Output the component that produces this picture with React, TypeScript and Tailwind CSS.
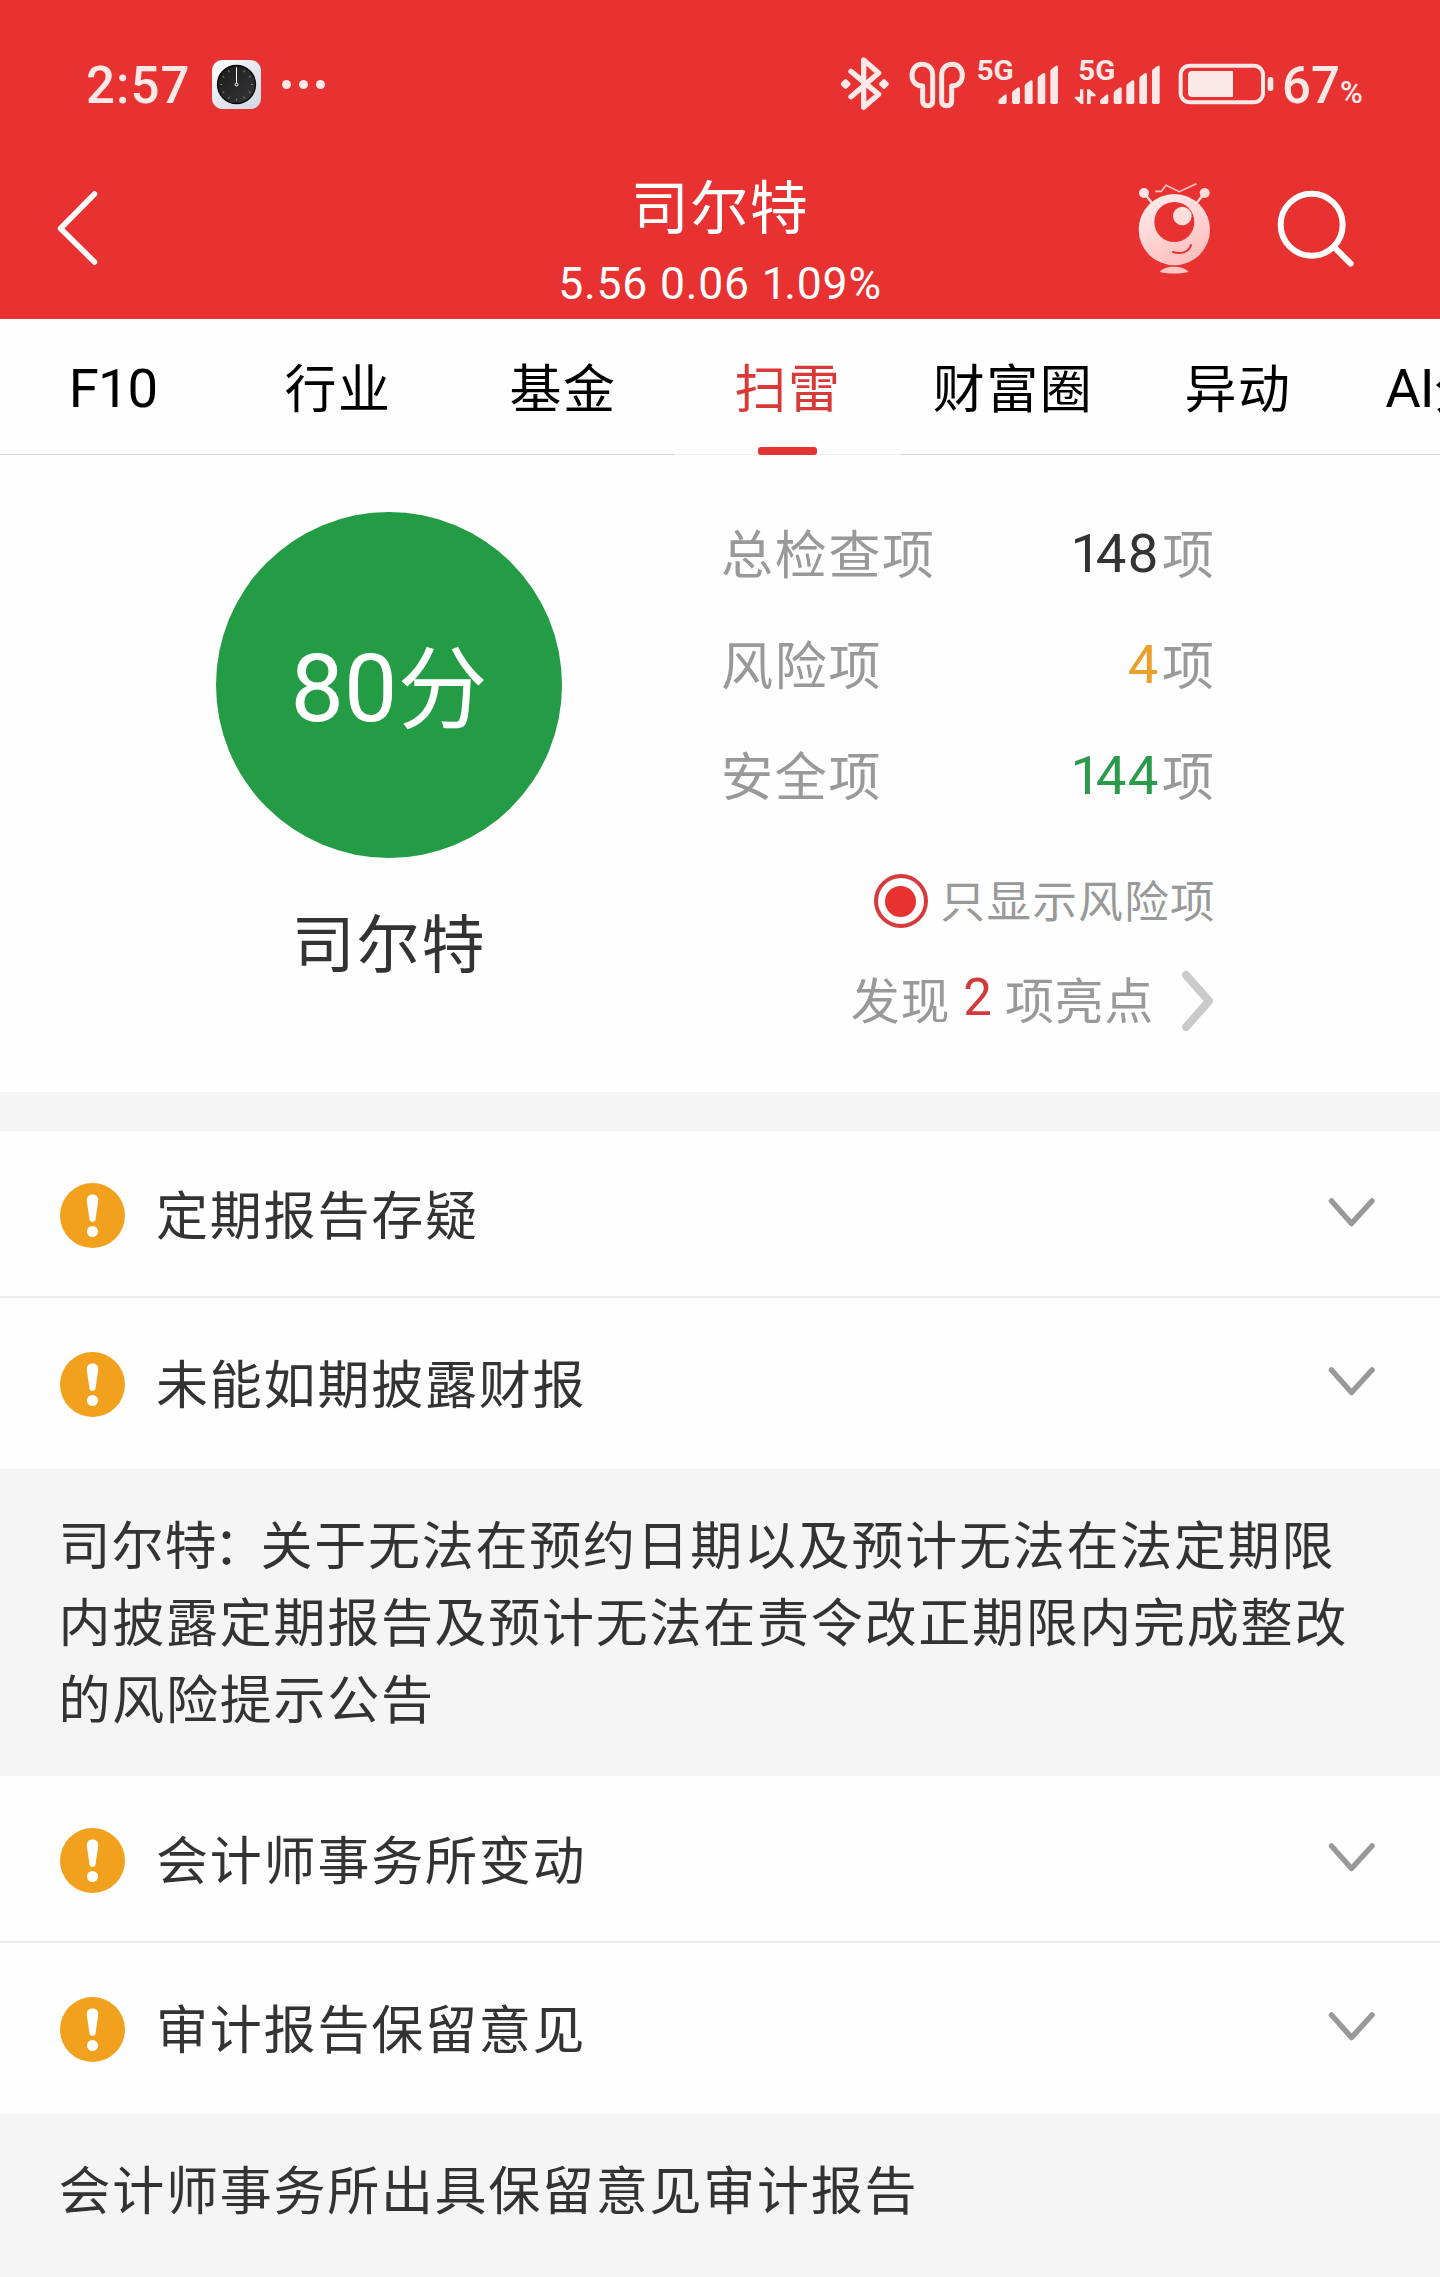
import React from "react";

const TABS = ["F10", "行业", "基金", "扫雷", "财富圈", "异动", "AI分析"];
const ACTIVE_TAB = "扫雷";

function Num({ className = "", children }: { className?: string; children: React.ReactNode }) {
  return <span className={`font-['Roboto'] leading-none ${className}`}>{children}</span>;
}

function ClockAppIcon() {
  const ticks = Array.from({ length: 12 }, (_, i) => i * 30);
  return (
    <svg className="mb-px h-[49px] w-[49px]" viewBox="0 0 147 147">
      <defs>
        <linearGradient id="clockBg" x1="0" y1="0" x2="1" y2="1">
          <stop offset="0" stopColor="#ffffff" />
          <stop offset="0.5" stopColor="#e3e8f0" />
          <stop offset="1" stopColor="#cfd8e4" />
        </linearGradient>
        <linearGradient id="clockFace" x1="0" y1="0" x2="1" y2="1">
          <stop offset="0" stopColor="#1c1c1c" />
          <stop offset="1" stopColor="#363636" />
        </linearGradient>
      </defs>
      <rect width="147" height="147" rx="32" fill="url(#clockBg)" />
      <circle cx="73.5" cy="73.5" r="57" fill="url(#clockFace)" stroke="#0a0a0a" strokeWidth="4" />
      {ticks.map((a) => (
        <line key={a} x1="73.5" y1="25" x2="73.5" y2="31" stroke="#bbb" strokeWidth="2" transform={`rotate(${a} 73.5 73.5)`} />
      ))}
      <line x1="73.5" y1="22" x2="73.5" y2="70" stroke="#fff" strokeWidth="3" />
      <circle cx="73.5" cy="73.5" r="4.5" fill="#333" stroke="#fff" strokeWidth="3" />
    </svg>
  );
}

function BluetoothIcon() {
  return (
    <svg className="h-[60px] w-[50px]" viewBox="60 45 150 180" fill="none">
      <path d="M93 94L176 163L131 202V60L176 99L93 170" stroke="#fde8e8" strokeWidth="16" strokeLinejoin="round" strokeLinecap="round" />
      <rect x="-12" y="-12" width="24" height="24" rx="6" fill="#fde8e8" transform="translate(77 132) rotate(45)" />
      <rect x="-12" y="-12" width="24" height="24" rx="6" fill="#fde8e8" transform="translate(192 132) rotate(45)" />
    </svg>
  );
}

function EarbudsIcon() {
  return (
    <svg className="ml-[19px] h-[60px] w-[57px]" viewBox="267 45 171 180" fill="none" stroke="#fde8e8" strokeWidth="15" strokeLinejoin="round">
      <path d="M338 106C338 86 325 73 306 73C287 73 276 88 276 106C276 126 289 138 308 138V182C308 192 314 197 323 197C332 197 338 192 338 182Z" />
      <path d="M365 106C365 86 378 73 397 73C416 73 427 88 427 106C427 126 414 138 395 138V182C395 192 389 197 380 197C371 197 365 192 365 182Z" />
    </svg>
  );
}

function SignalBars({ dx }: { dx: number }) {
  return (
    <g fill="#fde8e8" transform={`translate(${dx} 0)`}>
      <path d="M538 178L553 165Q560 160 560 168V187Q560 192 555 192H540Q535 192 535 187Q534 181 538 178Z" />
      <path d="M580 152L592 143Q600 139 600 147V187Q600 192 595 192H581Q576 192 576 187V160Q576 155 580 152Z" />
      <path d="M618 131L630 122Q638 118 638 126V187Q638 192 633 192H619Q614 192 614 187V138Q614 134 618 131Z" />
      <path d="M657 109L669 100Q676 96 676 104V187Q676 192 671 192H658Q653 192 653 187V116Q653 112 657 109Z" />
      <path d="M695 87L707 78Q714 74 714 82V187Q714 192 709 192H696Q691 192 691 187V94Q691 90 695 87Z" />
    </g>
  );
}

function SignalIcon() {
  return (
    <svg className="ml-[10px] h-[60px] w-[83px]" viewBox="468 45 249 180">
      <text x="470" y="121" fontSize="84" fontWeight="700" fontFamily="Roboto" fill="#fde8e8" textLength="111" lengthAdjust="spacingAndGlyphs">5G</text>
      <SignalBars dx={0} />
    </svg>
  );
}

function SignalDataIcon() {
  return (
    <svg className="ml-[15px] h-[60px] w-[87px]" viewBox="42 45 261 180">
      <text x="55" y="121" fontSize="84" fontWeight="700" fontFamily="Roboto" fill="#fde8e8" textLength="111" lengthAdjust="spacingAndGlyphs">5G</text>
      <path d="M60 148H70V192H63L44 174V170H60ZM81 148H89L107 164V169H92V192H81Z" fill="#fde8e8" />
      <SignalBars dx={-415} />
    </svg>
  );
}

function BatteryIcon() {
  return (
    <svg className="ml-[17px] h-[60px] w-[96px]" viewBox="354 45 288 180">
      <rect x="362" y="77" width="247" height="110" rx="27" fill="none" stroke="#fde8e8" strokeWidth="12" />
      <path d="M396 93H519V171H396Q384 171 384 159V105Q384 93 396 93Z" fill="#fde8e8" />
      <rect x="623" y="111" width="17" height="42" rx="8" fill="#fde8e8" />
    </svg>
  );
}

function StatusBar() {
  return (
    <div className="flex h-[140px] items-start pl-[85px] pt-[55px] text-[#fde8e8]">
      <div className="flex h-[60px] items-center">
        <Num className="w-[127px] whitespace-nowrap pl-px text-[51px] font-medium tracking-[1px]">2:57</Num>
        <ClockAppIcon />
        <div className="mb-[2px] ml-[21px] flex gap-2">
          <i className="size-[9px] rounded-full bg-[#fde8e8]" />
          <i className="size-[9px] rounded-full bg-[#fde8e8]" />
          <i className="size-[9px] rounded-full bg-[#fde8e8]" />
        </div>
      </div>
      <div className="ml-auto mr-[76px] flex h-[60px] w-[524px] shrink-0 items-center">
        <BluetoothIcon />
        <EarbudsIcon />
        <SignalIcon />
        <SignalDataIcon />
        <BatteryIcon />
        <div className="ml-2 flex items-baseline whitespace-nowrap">
          <Num className="text-[51px] font-medium">67</Num>
          <Num className="text-[31px] font-medium">%</Num>
        </div>
      </div>
    </div>
  );
}

function MascotIcon() {
  return (
    <svg className="mt-px h-[92px] w-[75px]" viewBox="110 65 225 276" fill="none">
      <defs>
        <linearGradient id="mascot" x1="0" y1="0" x2="0.5" y2="1">
          <stop offset="0" stopColor="#fff0f0" />
          <stop offset="1" stopColor="#ffc0c0" />
        </linearGradient>
      </defs>
      <path d="M165 93H183L197 75L237 94L288 70" stroke="#ffc4c4" strokeWidth="5" />
      <path d="M131 98L157 130M313 98L287 130" stroke="#ffdada" strokeWidth="7" />
      <circle cx="131" cy="98" r="15" fill="#ffe6e6" />
      <circle cx="313" cy="98" r="15" fill="#ffdada" />
      <circle cx="222" cy="208" r="107" fill="url(#mascot)" />
      <circle cx="222" cy="185" r="60" fill="#e83231" />
      <circle cx="246" cy="167" r="28" fill="#ffdede" />
      <path d="M218 275C242 283 266 275 272 254" stroke="#e83231" strokeWidth="6" strokeLinecap="round" />
      <path d="M178 335C192 314 250 314 264 335C236 341 206 341 178 335Z" fill="#ffc4c4" />
    </svg>
  );
}

function Header() {
  return (
    <header className="h-[319px] bg-[#e83231] text-white">
      <StatusBar />
      <div className="grid h-[179px] grid-cols-[1fr_440px_1fr]">
        <div className="pl-[55px] pt-[49px]">
          <svg className="h-[78px] w-[45px]" viewBox="0 0 45 78" fill="none">
            <path d="M39.500 5L5.500 39.500L39.500 73" stroke="#fff" strokeWidth="5.5" strokeLinecap="round" strokeLinejoin="round" />
          </svg>
        </div>
        <div className="flex flex-col items-center">
          <h1 className="mt-[24px] h-[80px] text-[58px] leading-[80px] tracking-[1.500px]">司尔特</h1>
          <Num className="mt-[18px] whitespace-pre text-[44.500px] tracking-[0.800px]">
            5.56 0.06 <span className="tracking-[-2.500px]">1</span>.09%
          </Num>
        </div>
        <div className="flex items-start justify-end pr-[85px] pt-[41px]">
          <MascotIcon />
          <svg className="ml-[65px] mt-[9px] h-[78px] w-[78px]" viewBox="532 88 234 234" fill="none" stroke="#fff" strokeWidth="18" strokeLinecap="round">
            <circle cx="636" cy="192" r="93" />
            <path d="M706 262L753 309" />
          </svg>
        </div>
      </div>
    </header>
  );
}

function Tabs() {
  return (
    <nav className="flex h-[136px] w-full overflow-hidden text-black">
      {TABS.map((t) => {
        const active = t === ACTIVE_TAB;
        return (
          <div
            key={t}
            className={`flex w-[225px] shrink-0 flex-col items-center border-b ${active ? "border-[#f0f0f0] text-[#d93a38]" : "border-[#dadada]"}`}
          >
            <div className="mt-[27px] flex h-[80px] items-center whitespace-nowrap pl-px text-[52px] leading-[80px] tracking-[1.500px]">
              {/^[A-Z]/.test(t) ? (
                <>
                  <Num className="mt-[4px] text-[54.500px] tracking-[-1px]">{t.replace(/[^A-Z0-9]/g, "")}</Num>
                  {t.replace(/[A-Z0-9]/g, "")}
                </>
              ) : (
                t
              )}
            </div>
            {active && <div className="mt-[21px] h-[8px] w-[59px] shrink-0 rounded-[3px] bg-[#e53333]" />}
          </div>
        );
      })}
    </nav>
  );
}

function StatRow({ label, value, color }: { label: string; value: string; color: string }) {
  const leadingOne = value.startsWith("1");
  return (
    <div className="flex h-[111px] items-center justify-between text-[52px] leading-[80px] tracking-[1.700px]">
      <span>{label}</span>
      <span className="flex items-center">
        <Num className={`mt-[4px] text-[54.500px] tracking-[1.500px] ${color}`}>
          {leadingOne && <span className="tracking-[-5.500px]">1</span>}
          {leadingOne ? value.slice(1) : value}
        </Num>
        <span className="ml-[2px] tracking-normal">项</span>
      </span>
    </div>
  );
}

function Summary() {
  return (
    <section className="flex h-[637px]">
      <div className="ml-[216px] mt-[57px] flex w-[346px] flex-col items-center">
        <div className="flex size-[346px] shrink-0 items-center justify-center rounded-full bg-[#249c46] text-white">
          <Num className="mt-[6px] text-[95px]">80</Num>
          <span className="mb-[6px] text-[90px] leading-[100px]">分</span>
        </div>
        <div className="mt-[37px] text-[63px] leading-[90px] tracking-[1.800px] text-[#333]">司尔特</div>
      </div>
      <div className="ml-[159px] mt-[41px] w-[493px] text-[#999]">
        <StatRow label="总检查项" value="148" color="text-[#333]" />
        <StatRow label="风险项" value="4" color="text-[#eba02b]" />
        <StatRow label="安全项" value="144" color="text-[#2b9a4b]" />
        <div className="-mr-[2px] mt-[42px] flex h-[60px] items-center justify-end">
          <span className="flex size-[54px] items-center justify-center rounded-full border-4 border-[#d63c3b]">
            <i className="size-[31px] rounded-full bg-[#e83231]" />
          </span>
          <span className="mb-[4px] ml-[13px] text-[44.500px] leading-[60px] tracking-[1.400px]">只显示风险项</span>
        </div>
        <div className="mt-[40px] flex h-[60px] items-center justify-end text-[49px] leading-[60px] tracking-[0.700px]">
          <span className="mb-[6px]">发现</span>
          <Num className="mb-[7px] ml-[13px] mr-[13px] text-[51px] tracking-normal text-[#d03a3a]">2</Num>
          <span className="mb-[6px]">项亮点</span>
          <svg className="ml-[27px] h-[64px] w-[33px]" viewBox="0 0 33 64" fill="none">
            <path d="M5 6L28 32L5 58" stroke="#cacaca" strokeWidth="8" strokeLinecap="round" strokeLinejoin="round" />
          </svg>
        </div>
      </div>
    </section>
  );
}

function RiskRow({ title, last = false }: { title: string; last?: boolean }) {
  return (
    <div className={`flex items-center pl-[60px] pr-[64px] ${last ? "h-[171px] pt-[2px]" : "h-[167px] border-b-2 border-[#ededed] pt-[4px]"}`}>
      <svg className="size-[65px]" viewBox="0 0 65 65">
        <circle cx="32.500" cy="32.500" r="32.500" fill="#f2a11e" />
        <path d="M32.500 11.500C36.500 11.500 38.500 14 38.200 18L35.500 36.500C35 39.800 30 39.800 29.500 36.500L26.800 18C26.500 14 28.500 11.500 32.500 11.500Z" fill="#fff" />
        <circle cx="32.500" cy="48.500" r="5.500" fill="#fff" />
      </svg>
      <span className="mb-[5px] ml-[31px] text-[52px] leading-[80px] tracking-[1.800px] text-[#333]">{title}</span>
      <svg className="mb-[6px] ml-auto h-[31px] w-[48px]" viewBox="0 0 48 31" fill="none">
        <path d="M3.500 4L23.500 26.500L44 4" stroke="#999" strokeWidth="5.5" strokeLinecap="round" strokeLinejoin="round" />
      </svg>
    </div>
  );
}

export default function App() {
  return (
    <div className="h-[2277px] w-[1440px] overflow-hidden bg-[#fefefe] font-['Noto_Sans_CJK_SC',sans-serif]">
      <Header />
      <Tabs />
      <Summary />
      <div className="h-[39px] bg-[#f5f5f5]" />
      <RiskRow title="定期报告存疑" />
      <RiskRow title="未能如期披露财报" last />
      <div className="h-[307px] whitespace-nowrap bg-[#f5f5f5] pl-[58.500px] pt-[36px] text-[52px] leading-[76.800px] tracking-[1.730px] text-[#333]">
        <span className="tracking-[1px]">司尔特</span>
        <span className="-ml-[4px] tracking-[-5px]">：</span>关于无法在预约日期以及预计无法在法定期限
        <br />
        内披露定期报告及预计无法在责令改正期限内完成整改
        <br />
        的风险提示公告
      </div>
      <RiskRow title="会计师事务所变动" />
      <RiskRow title="审计报告保留意见" last />
      <div className="h-[163px] whitespace-nowrap bg-[#f5f5f5] pl-[58.500px] pt-[36px] text-[52px] leading-[76.800px] tracking-[1.730px] text-[#333]">
        会计师事务所出具保留意见审计报告
      </div>
    </div>
  );
}
